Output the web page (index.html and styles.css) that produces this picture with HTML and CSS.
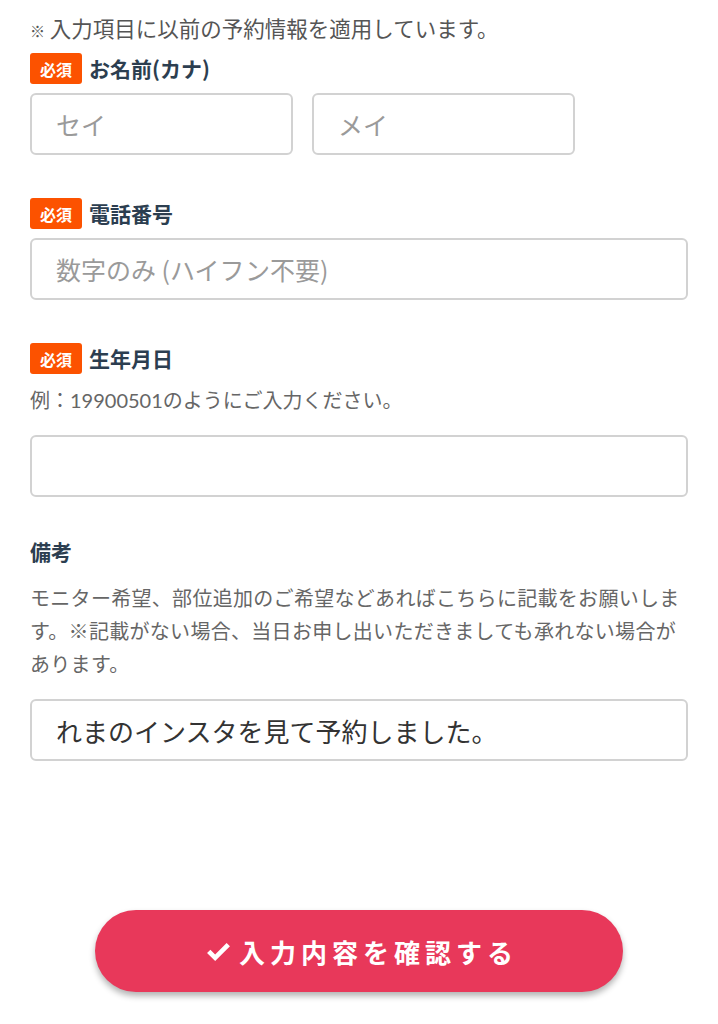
FILE: index.html
```html
<!DOCTYPE html>
<html lang="ja">
<head>
<meta charset="utf-8">
<title>予約フォーム</title>
<link rel="stylesheet" href="styles.css">
</head>
<body>
<main class="form">
  <p class="note"><span class="mark">※</span> 入力項目に以前の予約情報を適用しています。</p>

  <section class="field field-first">
    <div class="label-row"><span class="badge">必須</span><span class="label">お名前(カナ)</span></div>
    <div class="name-row">
      <div class="input"><span class="placeholder">セイ</span></div>
      <div class="input"><span class="placeholder">メイ</span></div>
    </div>
  </section>

  <section class="field">
    <div class="label-row"><span class="badge">必須</span><span class="label">電話番号</span></div>
    <div class="input"><span class="placeholder">数字のみ (ハイフン不要)</span></div>
  </section>

  <section class="field">
    <div class="label-row"><span class="badge">必須</span><span class="label">生年月日</span></div>
    <p class="hint">例：19900501のようにご入力ください。</p>
    <div class="input input-hinted"></div>
  </section>

  <section class="field field-remarks">
    <div class="label-row"><span class="label">備考</span></div>
    <p class="desc">モニター希望、部位追加のご希望などあればこちらに記載をお願いします。※記載がない場合、当日お申し出いただきましても承れない場合があります。</p>
    <div class="input input-desc"><span class="value">れまのインスタを見て予約しました。</span></div>
  </section>

  <div class="actions">
    <button class="submit" type="button">
      <svg class="check" viewBox="0 0 28 22" width="27" height="21" aria-hidden="true"><path d="M2 11.5 L5.5 8 L10.5 13 L22.5 1 L26 4.5 L10.5 20 Z" fill="#fff"/></svg>
      <span>入力内容を確認する</span>
    </button>
  </div>
</main>
</body>
</html>
```

FILE: styles.css
```css
* { box-sizing: border-box; }

body {
  margin: 0;
  background: #fff;
  font-family: "Noto Sans CJK JP", sans-serif;
  color: #555;
}

.form {
  padding: 0 30px 40px;
}

.note {
  height: 30px;
  margin: 13px 0 0;
  font-size: 21.5px;
  line-height: 30px;
  color: #555;
  white-space: nowrap;
}

.mark {
  display: inline-block;
  font-size: 15px;
  line-height: 1;
}

.field {
  margin-top: 43px;
}

.field-first {
  margin-top: 10px;
}

.label-row {
  display: flex;
  align-items: center;
  gap: 7px;
  height: 31px;
}

.badge {
  display: inline-flex;
  align-items: center;
  justify-content: center;
  width: 52px;
  height: 31px;
  border-radius: 3px;
  background: #fc5200;
  color: #fff;
  font-size: 16px;
  font-weight: 700;
}

.label {
  font-size: 21px;
  font-weight: 700;
  line-height: 1;
  color: #2c3e50;
}

.name-row {
  display: flex;
  gap: 19px;
}

.name-row .input {
  width: 263px;
}

.input {
  display: flex;
  align-items: center;
  height: 62px;
  margin-top: 9px;
  padding: 0 24px;
  border: 2px solid #d2d2d2;
  border-radius: 6px;
  background: #fff;
}

.placeholder {
  font-size: 25px;
  color: #9a9a9a;
}

.value {
  font-size: 26px;
  color: #333;
}

.hint {
  height: 30px;
  margin: 11px 0 0;
  font-family: "Lato", "Noto Sans CJK JP", sans-serif;
  font-size: 20px;
  line-height: 30px;
  color: #666;
}

.input-hinted {
  margin-top: 20px;
}

.field-remarks {
  margin-top: 39px;
}

.desc {
  height: 99px;
  margin: 14px 0 0;
  font-size: 20px;
  letter-spacing: 0.3px;
  line-height: 33px;
  color: #666;
}

.input-desc {
  margin-top: 19px;
}

.actions {
  display: flex;
  justify-content: center;
  margin-top: 149px;
}

.submit {
  display: flex;
  align-items: center;
  justify-content: center;
  gap: 7px;
  width: 528px;
  height: 82px;
  border: none;
  border-radius: 41px;
  background: #e8385a;
  color: #fff;
  font-family: "Noto Sans CJK JP", sans-serif;
  font-size: 26px;
  font-weight: 700;
  letter-spacing: 5px;
  box-shadow: 0 4px 6px rgba(0, 0, 0, 0.3);
  padding: 0 0 0 5px;
}

.check {
  display: block;
  margin-top: 2px;
}
```
